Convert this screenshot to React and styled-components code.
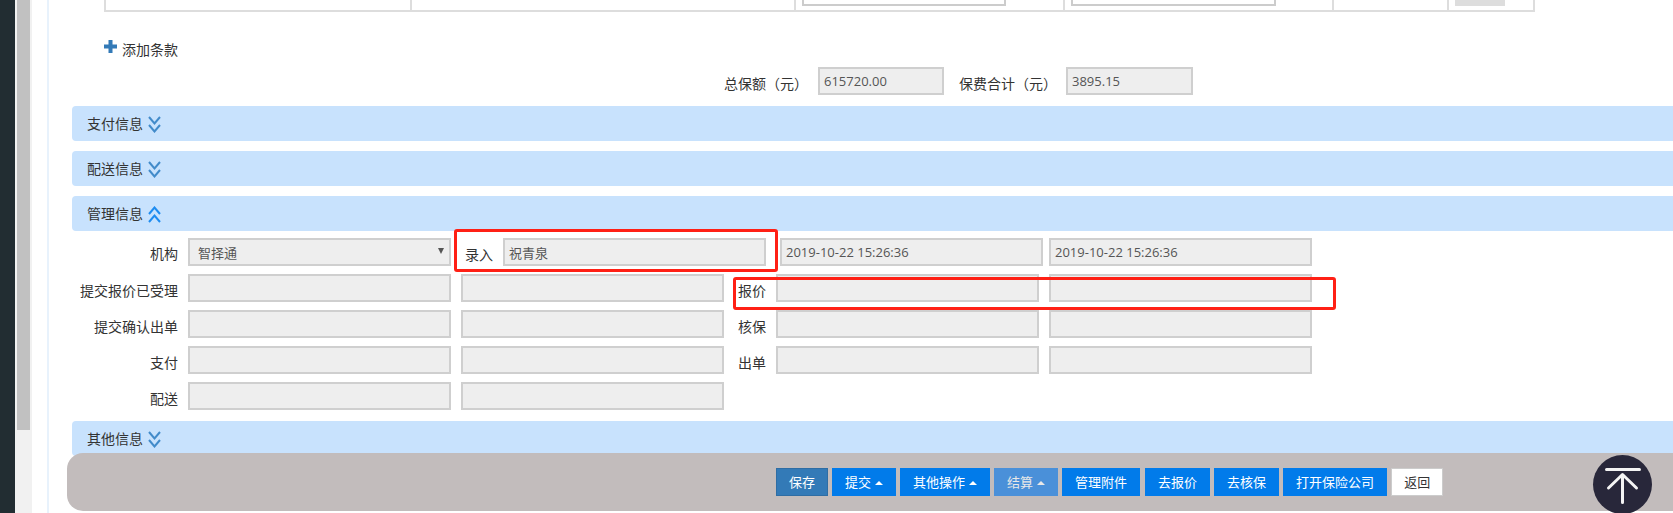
import React from 'react'
import styled, { createGlobalStyle } from 'styled-components'

const GlobalStyle = createGlobalStyle`
  html, body {
    margin: 0;
    padding: 0;
    background: #fff;
    overflow: hidden;
  }
  * { box-sizing: border-box; }
`

const Chevrons = ({ up }) => (
  <ChevronIcon width="13" height="17" viewBox="0 0 13 17" $up={up}>
    {up ? (
      <path d="M1 8 L6.500 1.500 L12 8 M1 16 L6.500 9.500 L12 16" />
    ) : (
      <path d="M1 1 L6.500 7.500 L12 1 M1 9 L6.500 15.500 L12 9" />
    )}
  </ChevronIcon>
)

const Panel = ({ title, up }) => (
  <PanelBar>
    <span>{title}</span>
    <Chevrons up={up} />
  </PanelBar>
)

const App = () => (
  <Page>
    <GlobalStyle />
    <Rail />
    <ScrollTrack>
      <ScrollThumb />
    </ScrollTrack>
    <Gutter />
    <Main>
      <TableTail>
        <TableCell $w={306} />
        <TableCell $w={384} />
        <TableCell $w={269}><CutInput $w={204} /></TableCell>
        <TableCell $w={269}><CutInput $w={205} /></TableCell>
        <TableCell $w={115} />
        <TableCell $w={86}><CutButton /></TableCell>
      </TableTail>

      <AddRow>
        <svg width="13" height="13" viewBox="0 0 13 13">
          <path d="M4.500 0h4v4.500H13v4H8.500V13h-4V8.500H0v-4h4.500z" fill="#337ab7" />
        </svg>
        <span>添加条款</span>
      </AddRow>

      <TotalRow>
        <FormLabel $width={94}>总保额（元）</FormLabel>
        <Field $width={126} value="615720.00" />
        <FormLabel $width={107} $left={15}>保费合计（元）</FormLabel>
        <Field $width={127} value="3895.15" />
      </TotalRow>

      <Panel title="支付信息" />
      <Panel title="配送信息" />
      <Panel title="管理信息" up />

      <FormBlock>
        <FormRow>
          <RightLabel $raise>机构</RightLabel>
          <SelectWrap>
            <Field $width={263} $text={8} value="智择通" />
          </SelectWrap>
          <FormLabel $width={28} $left={14}>录入</FormLabel>
          <Field $width={263} $left={10} value="祝青泉" />
          <Field $width={263} $left={14} value="2019-10-22 15:26:36" />
          <Field $width={263} $left={6} value="2019-10-22 15:26:36" />
        </FormRow>
        <FormRow>
          <RightLabel>提交报价已受理</RightLabel>
          <Field $width={263} $left={10} />
          <Field $width={263} $left={10} />
          <FormLabel $width={28} $left={14}>报价</FormLabel>
          <Field $width={263} $left={10} />
          <Field $width={263} $left={10} />
        </FormRow>
        <FormRow>
          <RightLabel>提交确认出单</RightLabel>
          <Field $width={263} $left={10} />
          <Field $width={263} $left={10} />
          <FormLabel $width={28} $left={14}>核保</FormLabel>
          <Field $width={263} $left={10} />
          <Field $width={263} $left={10} />
        </FormRow>
        <FormRow>
          <RightLabel>支付</RightLabel>
          <Field $width={263} $left={10} />
          <Field $width={263} $left={10} />
          <FormLabel $width={28} $left={14}>出单</FormLabel>
          <Field $width={263} $left={10} />
          <Field $width={263} $left={10} />
        </FormRow>
        <FormRow>
          <RightLabel>配送</RightLabel>
          <Field $width={263} $left={10} />
          <Field $width={263} $left={10} />
        </FormRow>
      </FormBlock>

      <Panel title="其他信息" />
    </Main>

    <MarkOne />
    <MarkTwo />

    <ActionBar>
      <ActionButton $kind="save">保存</ActionButton>
      <ActionButton>提交<Caret /></ActionButton>
      <ActionButton>其他操作<Caret /></ActionButton>
      <ActionButton $kind="muted">结算<Caret /></ActionButton>
      <ActionButton>管理附件</ActionButton>
      <ActionButton $nudge>去报价</ActionButton>
      <ActionButton>去核保</ActionButton>
      <ActionButton>打开保险公司</ActionButton>
      <ActionButton $kind="back">返回</ActionButton>
    </ActionBar>

    <BackTop>
      <svg width="59" height="59" viewBox="0 0 59 59">
        <path
          d="M13.500 14.500 H46.500 M29.500 20 V47.500 M15.500 33 L29.500 19.500 L43.500 33"
          fill="none"
          stroke="#f4f4f4"
          strokeWidth="3"
          strokeLinecap="round"
          strokeLinejoin="round"
        />
      </svg>
    </BackTop>
  </Page>
)

export default App

const Page = styled.div`
  position: relative;
  display: flex;
  width: 1673px;
  height: 513px;
  overflow: hidden;
  background: #fff;
  color: #333;
  font-family: "Open Sans", "Noto Sans CJK SC", sans-serif;
  font-size: 14px;
`

const Rail = styled.div`
  width: 15px;
  background: #222d32;
`

const ScrollTrack = styled.div`
  width: 17px;
  padding-left: 2px;
  background: #f1f1f1;
`

const ScrollThumb = styled.div`
  width: 13px;
  height: 430px;
  background: #c1c1c1;
`

const Gutter = styled.div`
  width: 15px;
`

const Main = styled.div`
  flex: 1;
  min-width: 0;
  padding-left: 23px;
  border-left: 2px solid #e8f2fc;
`

const TableTail = styled.div`
  display: flex;
  width: 1431px;
  height: 12px;
  margin-left: 32px;
  border-bottom: 2px solid #ddd;
  border-left: 2px solid #ddd;
`

const TableCell = styled.div`
  flex: none;
  width: ${p => p.$w}px;
  padding: 0 6px;
  border-right: 2px solid #ddd;
`

const CutInput = styled.div`
  width: ${p => p.$w}px;
  height: 6px;
  background: #fff;
  border: 2px solid #ccc;
  border-top: 0;
`

const CutButton = styled.div`
  width: 50px;
  height: 6px;
  background: #ddd;
`

const AddRow = styled.div`
  display: flex;
  align-items: center;
  gap: 5px;
  height: 20px;
  margin: 28px 0 0 32px;
  line-height: 20px;

  svg {
    margin-top: -7px;
  }
`

const TotalRow = styled.div`
  display: flex;
  align-items: center;
  height: 28px;
  margin: 7px 0 11px;
  padding-left: 652px;
`

const PanelBar = styled.div`
  display: flex;
  align-items: center;
  gap: 5px;
  height: 35px;
  margin-bottom: 10px;
  padding-left: 15px;
  background: #c8e2fd;
  border-radius: 4px 0 0 4px;
  line-height: 20px;
`

const ChevronIcon = styled.svg`
  margin-top: 2px;
  fill: none;
  stroke: ${p => (p.$up ? '#1e8cf0' : '#428bca')};
  stroke-width: 2;
`

const FormBlock = styled.div`
  display: flex;
  flex-direction: column;
  gap: 8px;
  margin: -3px 0 11px;
`

const FormRow = styled.div`
  display: flex;
  align-items: center;
  height: 28px;
`

const FormLabel = styled.label`
  flex: none;
  width: ${p => p.$width}px;
  margin-left: ${p => p.$left || 0}px;
  margin-top: ${p => (p.$raise ? 1 : 3)}px;
  white-space: nowrap;
`

const RightLabel = styled(FormLabel)`
  width: 106px;
  text-align: right;
`

const Field = styled.input.attrs({ readOnly: true })`
  flex: none;
  width: ${p => p.$width}px;
  height: 28px;
  margin-left: ${p => p.$left || 0}px;
  padding: 0 ${p => p.$text || 4}px;
  background: #eee;
  border: 2px solid #cfcfcf;
  border-radius: 0;
  outline: none;
  color: #555;
  font-family: inherit;
  font-size: 13px;
`

const SelectWrap = styled.div`
  position: relative;
  margin-left: 10px;

  &::after {
    content: '';
    position: absolute;
    top: 10px;
    right: 7px;
    border-top: 6px solid #555;
    border-left: 3px solid transparent;
    border-right: 3px solid transparent;
  }
`

const Mark = styled.div`
  position: absolute;
  border: 3px solid #ff2015;
  border-radius: 3px;
  pointer-events: none;
`

const MarkOne = styled(Mark)`
  left: 454px;
  top: 229px;
  width: 324px;
  height: 43px;
`

const MarkTwo = styled(Mark)`
  left: 733px;
  top: 277px;
  width: 603px;
  height: 33px;
`

const ActionBar = styled.div`
  position: absolute;
  left: 67px;
  right: 0;
  top: 453px;
  display: flex;
  align-items: center;
  gap: 4px;
  height: 58px;
  padding-left: 709px;
  background: #c2bcbc;
  border-radius: 16px 0 0 16px;
`

const kinds = {
  save: 'background: #337ab7; border-color: #2e6da4; color: #fff;',
  muted: 'background: #4a90d9; border-color: #4a90d9; color: #e8e8e8;',
  back: 'background: #fff; border-color: #ccc; color: #333;',
}

const ActionButton = styled.button`
  display: flex;
  align-items: center;
  height: 28px;
  margin-left: ${p => (p.$nudge ? 1 : 0)}px;
  padding: 0 12px 2px;
  background: #017bea;
  border: 1px solid #017bea;
  border-radius: 0;
  color: #fff;
  font-family: inherit;
  font-size: 13px;
  ${p => kinds[p.$kind] || ''}
`

const Caret = styled.i`
  width: 0;
  height: 0;
  margin: 4px 0 0 4px;
  border-bottom: 4px solid currentColor;
  border-left: 4px solid transparent;
  border-right: 4px solid transparent;
`

const BackTop = styled.div`
  position: absolute;
  left: 1593px;
  top: 455px;
  width: 59px;
  height: 59px;
  background: #28273a;
  border-radius: 50%;
`
